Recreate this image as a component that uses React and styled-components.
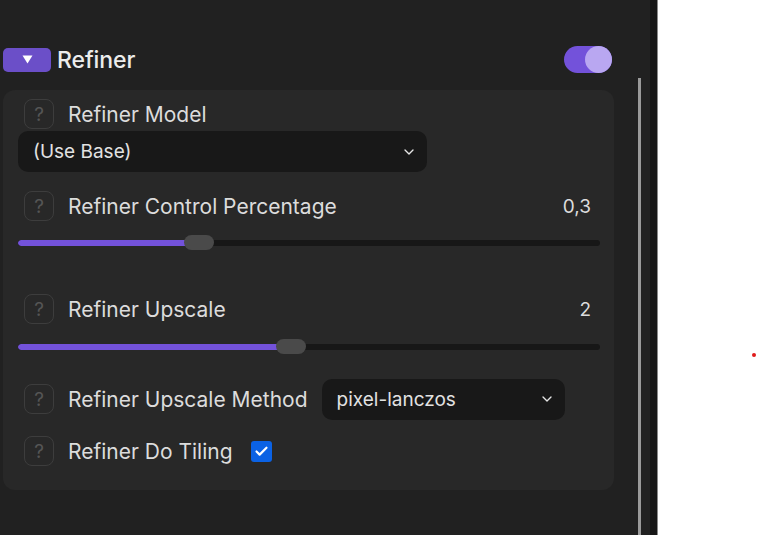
import React from 'react';
import styled, { createGlobalStyle } from 'styled-components';
import { ChevronDown, Check } from 'lucide-react';

const GlobalStyle = createGlobalStyle`
	html, body {
		margin: 0;
		padding: 0;
		background: #ffffff;
	}
	body {
		font-family: Inter, "Noto Sans", sans-serif;
		-webkit-font-smoothing: antialiased;
	}
`;

const Page = styled.div`
	display: flex;
	width: 757px;
	height: 535px;
	overflow: hidden;
	position: relative;
`;

const Panel = styled.div`
	position: relative;
	width: 650px;
	height: 535px;
	background: #212121;
	padding: 46px 0 0 3px;
	box-sizing: border-box;
	display: flex;
	flex-direction: column;
`;

const Divider = styled.div`
	width: 7px;
	height: 535px;
	background: #171717;
	border-right: 1px solid #8a8a8a;
`;

const Blank = styled.div`
	flex: 1;
	position: relative;
	background: #ffffff;
`;

const RedDot = styled.span`
	position: absolute;
	left: 94px;
	top: 353px;
	width: 4px;
	height: 4px;
	border-radius: 50%;
	background: #e01b1b;
`;

const ScrollThumb = styled.div`
	position: absolute;
	left: 638px;
	top: 78px;
	bottom: 0;
	width: 3px;
	background: #9a9a9a;
`;

const Header = styled.div`
	width: 609px;
	height: 27px;
	display: flex;
	align-items: center;
	justify-content: space-between;
`;

const HeaderLeft = styled.div`
	display: flex;
	align-items: center;
	gap: 6px;
`;

const CollapseButton = styled.button`
	width: 48px;
	height: 24px;
	border: none;
	border-radius: 5px;
	background: #6b4fc8;
	display: flex;
	align-items: center;
	justify-content: center;
	padding: 0;
`;

const Title = styled.span`
	font-size: 23px;
	font-weight: 500;
	color: #ececec;
	letter-spacing: -0.1px;
`;

const Toggle = styled.div`
	width: 48px;
	height: 27px;
	border-radius: 14px;
	background: #7352da;
	display: flex;
	justify-content: flex-end;
`;

const Knob = styled.div`
	width: 27px;
	height: 27px;
	border-radius: 50%;
	background: #b9a7f1;
`;

const Card = styled.div`
	margin-top: 17px;
	width: 611px;
	box-sizing: border-box;
	background: #282828;
	border-radius: 12px;
	padding: 9px 14px 24px 15px;
	display: flex;
	flex-direction: column;
`;

const Row = styled.div`
	display: flex;
	align-items: center;
	height: 30px;
	margin-left: 6px;
	margin-top: ${p => p.$top || 0}px;
`;

const Help = styled.div`
	width: 30px;
	height: 30px;
	box-sizing: border-box;
	border: 1px solid #3d3d3d;
	border-radius: 8px;
	display: flex;
	align-items: center;
	justify-content: center;
	color: #555555;
	font-size: 19px;
	flex-shrink: 0;
`;

const Label = styled.span`
	margin-left: 14px;
	font-size: 21px;
	color: #dcdcdc;
	white-space: nowrap;
`;

const Value = styled.span`
	margin-left: auto;
	margin-right: 9px;
	font-size: 19px;
	color: #dcdcdc;
`;

const Select = styled.div`
	width: ${p => p.$width}px;
	height: 41px;
	box-sizing: border-box;
	margin-top: ${p => p.$top || 0}px;
	margin-left: ${p => p.$left || 0}px;
	background: #181818;
	border-radius: 10px;
	padding: 0 10px 0 15px;
	display: flex;
	align-items: center;
	justify-content: space-between;
	font-size: 19px;
	color: #e2e2e2;
	flex-shrink: 0;
`;

const Slider = styled.div`
	position: relative;
	width: 582px;
	height: 15px;
	margin-top: ${p => p.$top}px;
	display: flex;
	align-items: center;
`;

const Track = styled.div`
	width: 100%;
	height: 6px;
	border-radius: 3px;
	background: #171717;
	overflow: hidden;
`;

const Fill = styled.div`
	height: 100%;
	background: #7352da;
	border-radius: 3px;
`;

const Thumb = styled.div`
	position: absolute;
	top: 0;
	width: 30px;
	height: 15px;
	border-radius: 8px;
	background: #4a4a4a;
`;

const CheckBox = styled.div`
	width: 21px;
	height: 21px;
	margin-left: 18px;
	border-radius: 3px;
	background: #0b62e4;
	display: flex;
	align-items: center;
	justify-content: center;
`;

function HelpIcon() {
	return <Help>?</Help>;
}

function RangeSlider({ value, top }) {
	return (
		<Slider $top={top}>
			<Track>
				<Fill style={{ width: `${value}px` }} />
			</Track>
			<Thumb style={{ left: `${value - 15}px` }} />
		</Slider>
	);
}

export default function App() {
	return (
		<>
			<GlobalStyle />
			<Page>
				<Panel>
					<Header>
						<HeaderLeft>
							<CollapseButton>
								<svg width="11" height="9" viewBox="0 0 11 9">
									<path d="M0.5 0.5 L10.5 0.5 L5.5 8.5 Z" fill="#ffffff" />
								</svg>
							</CollapseButton>
							<Title>Refiner</Title>
						</HeaderLeft>
						<Toggle>
							<Knob />
						</Toggle>
					</Header>
					<Card>
						<Row>
							<HelpIcon />
							<Label>Refiner Model</Label>
						</Row>
						<Select $width={409} $top={2}>
							<span>(Use Base)</span>
							<ChevronDown size={16} color="#e6e6e6" strokeWidth={2} />
						</Select>
						<Row $top={19}>
							<HelpIcon />
							<Label>Refiner Control Percentage</Label>
							<Value>0,3</Value>
						</Row>
						<RangeSlider value={181} top={14} />
						<Row $top={44}>
							<HelpIcon />
							<Label>Refiner Upscale</Label>
							<Value>2</Value>
						</Row>
						<RangeSlider value={273} top={15} />
						<Row $top={30}>
							<HelpIcon />
							<Label>Refiner Upscale Method</Label>
							<Select $width={243} $left={14}>
								<span>pixel-lanczos</span>
								<ChevronDown size={16} color="#e6e6e6" strokeWidth={2} />
							</Select>
						</Row>
						<Row $top={22}>
							<HelpIcon />
							<Label>Refiner Do Tiling</Label>
							<CheckBox>
								<Check size={15} color="#ffffff" strokeWidth={3.5} />
							</CheckBox>
						</Row>
					</Card>
					<ScrollThumb />
				</Panel>
				<Divider />
				<Blank>
					<RedDot />
				</Blank>
			</Page>
		</>
	);
}
